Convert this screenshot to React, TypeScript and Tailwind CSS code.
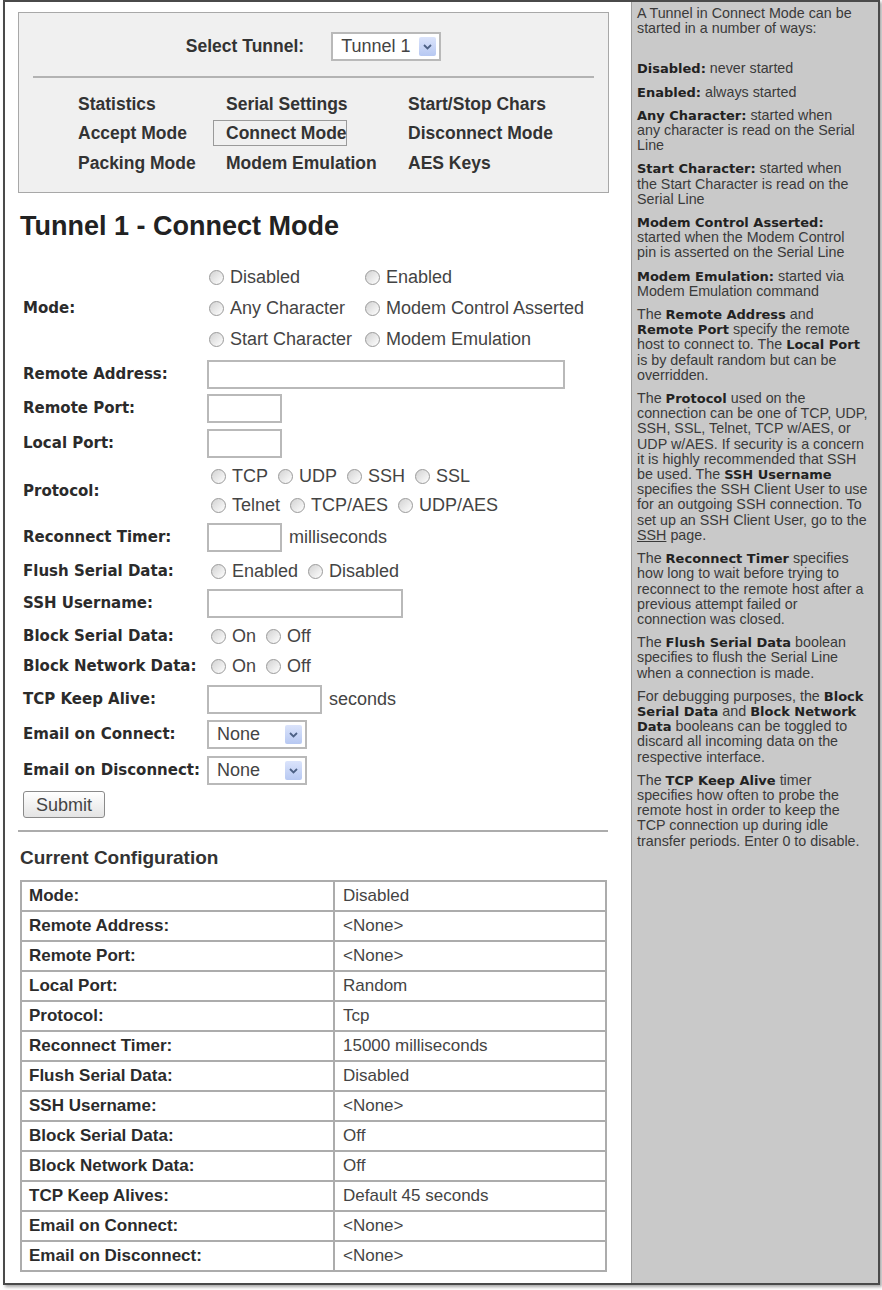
import React from 'react';

const LABEL = "font-['DejaVu_Sans',sans-serif] font-bold text-[15px] text-[#2b2b2b] whitespace-nowrap";
const RADIO_TEXT = "font-['Liberation_Sans',Arial,sans-serif] text-[18px] text-[#444]";
const NAV_TEXT = "font-['Liberation_Sans',Arial,sans-serif] text-[17.5px] font-bold text-[#333] whitespace-nowrap";
const INPUT = 'h-[29px] border-2 border-[#b9b9b9] bg-white';

function Radio({ label }: { label: string }) {
  return (
    <span className="inline-flex items-center whitespace-nowrap">
      <span className="mr-[6px] inline-block h-[15px] w-[15px] rounded-full border border-[#9a9a9a] bg-gradient-to-br from-[#d2d2d2] to-white" />
      <span className={RADIO_TEXT}>{label}</span>
    </span>
  );
}

function Dropdown({ value, width }: { value: string; width: string }) {
  return (
    <div className={`flex h-[29px] items-center justify-between border-2 border-[#b9b9b9] bg-white pl-[8px] pr-[3px] ${width}`}>
      <span className={RADIO_TEXT}>{value}</span>
      <span className="flex h-[19px] w-[17px] items-center justify-center rounded-[2px] bg-gradient-to-b from-[#dbe4fb] to-[#b7c8f2]">
        <svg width="9" height="6" viewBox="0 0 9 6">
          <path d="M1 1l3.5 3.5L8 1" fill="none" stroke="#4d6185" strokeWidth="1.8" />
        </svg>
      </span>
    </div>
  );
}

const NAV = [
  ['Statistics', 'Serial Settings', 'Start/Stop Chars'],
  ['Accept Mode', 'Connect Mode', 'Disconnect Mode'],
  ['Packing Mode', 'Modem Emulation', 'AES Keys'],
];

const CONFIG: [string, string][] = [
  ['Mode:', 'Disabled'],
  ['Remote Address:', '<None>'],
  ['Remote Port:', '<None>'],
  ['Local Port:', 'Random'],
  ['Protocol:', 'Tcp'],
  ['Reconnect Timer:', '15000 milliseconds'],
  ['Flush Serial Data:', 'Disabled'],
  ['SSH Username:', '<None>'],
  ['Block Serial Data:', 'Off'],
  ['Block Network Data:', 'Off'],
  ['TCP Keep Alives:', 'Default 45 seconds'],
  ['Email on Connect:', '<None>'],
  ['Email on Disconnect:', '<None>'],
];

function TopNav() {
  return (
    <div className="h-[181px] w-[591px] border border-[#a8a8a8] bg-[#f0f0f0]">
      <div className="mt-[19px] flex items-center justify-center gap-[27px]">
        <span className={NAV_TEXT}>Select Tunnel:</span>
        <Dropdown value="Tunnel 1" width="w-[110px]" />
      </div>
      <div className="mx-[14px] mt-[15px] h-[2px] bg-[#b3b3b3]" />
      <div className="mt-[11px] grid grid-cols-[148px_182px_auto] pl-[59px]">
        {NAV.flat().map((item) => (
          <div key={item} className="flex h-[29.5px] items-center">
            {item === 'Connect Mode' ? (
              <span className={`-ml-[13px] flex h-[26px] w-[134px] items-center border border-[#9a9a9a] pl-[12px] ${NAV_TEXT}`}>
                {item}
              </span>
            ) : (
              <span className={NAV_TEXT}>{item}</span>
            )}
          </div>
        ))}
      </div>
    </div>
  );
}

function FormRow({ label, className, children }: { label: string; className: string; children: React.ReactNode }) {
  return (
    <div className={`flex items-center ${className}`}>
      <div className={`w-[184px] ${LABEL}`}>{label}</div>
      <div className="flex items-center">{children}</div>
    </div>
  );
}

function ConnectForm() {
  return (
    <div className="mt-[19px] pl-[18px]">
      <FormRow label="Mode:" className="h-[94px]">
        <div className="grid grid-cols-[156px_auto] pl-[2px]">
          <div className="flex h-[31px] items-center"><Radio label="Disabled" /></div>
          <div className="flex h-[31px] items-center"><Radio label="Enabled" /></div>
          <div className="flex h-[31px] items-center"><Radio label="Any Character" /></div>
          <div className="flex h-[31px] items-center"><Radio label="Modem Control Asserted" /></div>
          <div className="flex h-[31px] items-center"><Radio label="Start Character" /></div>
          <div className="flex h-[31px] items-center"><Radio label="Modem Emulation" /></div>
        </div>
      </FormRow>
      <FormRow label="Remote Address:" className="mt-[5px] h-[29px]">
        <div className={`${INPUT} w-[358px]`} />
      </FormRow>
      <FormRow label="Remote Port:" className="mt-[5px] h-[29px]">
        <div className={`${INPUT} w-[75px]`} />
      </FormRow>
      <FormRow label="Local Port:" className="mt-[6px] h-[29px]">
        <div className={`${INPUT} w-[75px]`} />
      </FormRow>
      <FormRow label="Protocol:" className="mt-[4px] h-[58px]">
        <div className="flex flex-col pl-[4px]">
          <div className="flex h-[29px] items-center gap-[10px]">
            <Radio label="TCP" />
            <Radio label="UDP" />
            <Radio label="SSH" />
            <Radio label="SSL" />
          </div>
          <div className="flex h-[29px] items-center gap-[10px]">
            <Radio label="Telnet" />
            <Radio label="TCP/AES" />
            <Radio label="UDP/AES" />
          </div>
        </div>
      </FormRow>
      <FormRow label="Reconnect Timer:" className="mt-[3px] h-[29px]">
        <div className={`${INPUT} w-[75px]`} />
        <span className={`ml-[7px] ${RADIO_TEXT}`}>milliseconds</span>
      </FormRow>
      <FormRow label="Flush Serial Data:" className="mt-[4px] h-[30px]">
        <div className="flex items-center gap-[10px] pl-[4px]">
          <Radio label="Enabled" />
          <Radio label="Disabled" />
        </div>
      </FormRow>
      <FormRow label="SSH Username:" className="mt-[3px] h-[29px]">
        <div className={`${INPUT} w-[196px]`} />
      </FormRow>
      <FormRow label="Block Serial Data:" className="mt-[3px] h-[30px]">
        <div className="flex items-center gap-[10px] pl-[4px]">
          <Radio label="On" />
          <Radio label="Off" />
        </div>
      </FormRow>
      <FormRow label="Block Network Data:" className="h-[30px]">
        <div className="flex items-center gap-[10px] pl-[4px]">
          <Radio label="On" />
          <Radio label="Off" />
        </div>
      </FormRow>
      <FormRow label="TCP Keep Alive:" className="mt-[4px] h-[29px]">
        <div className={`${INPUT} w-[115px]`} />
        <span className={`ml-[7px] ${RADIO_TEXT}`}>seconds</span>
      </FormRow>
      <FormRow label="Email on Connect:" className="mt-[6px] h-[29px]">
        <Dropdown value="None" width="w-[100px]" />
      </FormRow>
      <FormRow label="Email on Disconnect:" className="mt-[7px] h-[29px]">
        <Dropdown value="None" width="w-[100px]" />
      </FormRow>
      <button
        type="button"
        className={`mt-[6px] h-[27px] w-[82px] rounded-[3px] border border-[#8a8a8a] bg-gradient-to-b from-white to-[#e4e4e4] ${RADIO_TEXT}`}
      >
        Submit
      </button>
    </div>
  );
}

function CurrentConfig() {
  return (
    <div className="pl-[15px]">
      <h3 className="font-['Liberation_Sans',Arial,sans-serif] text-[19px] leading-[24px] font-bold text-[#333]">Current Configuration</h3>
      <table className="mt-[10px] w-[587px] border-collapse">
        <tbody>
          {CONFIG.map(([k, v]) => (
            <tr key={k} className="h-[30px]">
              <td className="w-[313px] border-2 border-[#acacac] pl-[7px] font-['Liberation_Sans',Arial,sans-serif] text-[17px] font-bold text-[#2b2b2b]">
                {k}
              </td>
              <td className="border-2 border-[#acacac] pl-[8px] font-['Liberation_Sans',Arial,sans-serif] text-[17px] text-[#444]">
                {v}
              </td>
            </tr>
          ))}
        </tbody>
      </table>
    </div>
  );
}

function B({ children }: { children: React.ReactNode }) {
  return <b className="font-['DejaVu_Sans',sans-serif] text-[13px] font-bold text-[#222]">{children}</b>;
}

function HelpPanel() {
  return (
    <div className="flex flex-col gap-[8px] pl-[5px] pt-[4px] font-['Liberation_Sans',Arial,sans-serif] text-[14.3px] leading-[15.2px] text-[#3a3a3a] whitespace-nowrap">
      <p className="mb-[17px]">
        A Tunnel in Connect Mode can be<br />started in a number of ways:
      </p>
      <p><B>Disabled:</B> never started</p>
      <p><B>Enabled:</B> always started</p>
      <p>
        <B>Any Character:</B> started when<br />any character is read on the Serial<br />Line
      </p>
      <p>
        <B>Start Character:</B> started when<br />the Start Character is read on the<br />Serial Line
      </p>
      <p>
        <B>Modem Control Asserted:</B><br />started when the Modem Control<br />pin is asserted on the Serial Line
      </p>
      <p>
        <B>Modem Emulation:</B> started via<br />Modem Emulation command
      </p>
      <p>
        The <B>Remote Address</B> and<br />
        <B>Remote Port</B> specify the remote<br />
        host to connect to. The <B>Local Port</B><br />
        is by default random but can be<br />
        overridden.
      </p>
      <p>
        The <B>Protocol</B> used on the<br />
        connection can be one of TCP, UDP,<br />
        SSH, SSL, Telnet, TCP w/AES, or<br />
        UDP w/AES. If security is a concern<br />
        it is highly recommended that SSH<br />
        be used. The <B>SSH Username</B><br />
        specifies the SSH Client User to use<br />
        for an outgoing SSH connection. To<br />
        set up an SSH Client User, go to the<br />
        <span className="underline">SSH</span> page.
      </p>
      <p>
        The <B>Reconnect Timer</B> specifies<br />
        how long to wait before trying to<br />
        reconnect to the remote host after a<br />
        previous attempt failed or<br />
        connection was closed.
      </p>
      <p>
        The <B>Flush Serial Data</B> boolean<br />
        specifies to flush the Serial Line<br />
        when a connection is made.
      </p>
      <p>
        For debugging purposes, the <B>Block</B><br />
        <B>Serial Data</B> and <B>Block Network</B><br />
        <B>Data</B> booleans can be toggled to<br />
        discard all incoming data on the<br />
        respective interface.
      </p>
      <p>
        The <B>TCP Keep Alive</B> timer<br />
        specifies how often to probe the<br />
        remote host in order to keep the<br />
        TCP connection up during idle<br />
        transfer periods. Enter 0 to disable.
      </p>
    </div>
  );
}

export default function App() {
  return (
    <div className="h-[1290px] w-[882px] bg-white">
      <div className="ml-[3px] flex h-[1285px] w-[877px] border-2 border-[#4a4a4a] shadow-[2px_2px_3px_rgba(0,0,0,0.35)]">
        <main className="w-[626px] pt-[10px]">
          <div className="pl-[13px]">
            <TopNav />
          </div>
          <h1 className="mt-[17px] pl-[15px] font-['Liberation_Sans',Arial,sans-serif] text-[27px] leading-[32px] font-bold text-[#222]">
            Tunnel 1 - Connect Mode
          </h1>
          <ConnectForm />
          <div className="mt-[12px] ml-[13px] h-[2px] w-[590px] bg-[#acacac]" />
          <div className="mt-[14px]">
            <CurrentConfig />
          </div>
        </main>
        <aside className="w-[247px] border-l border-[#9c9c9c] bg-[#c9c9c9]">
          <HelpPanel />
        </aside>
      </div>
    </div>
  );
}
